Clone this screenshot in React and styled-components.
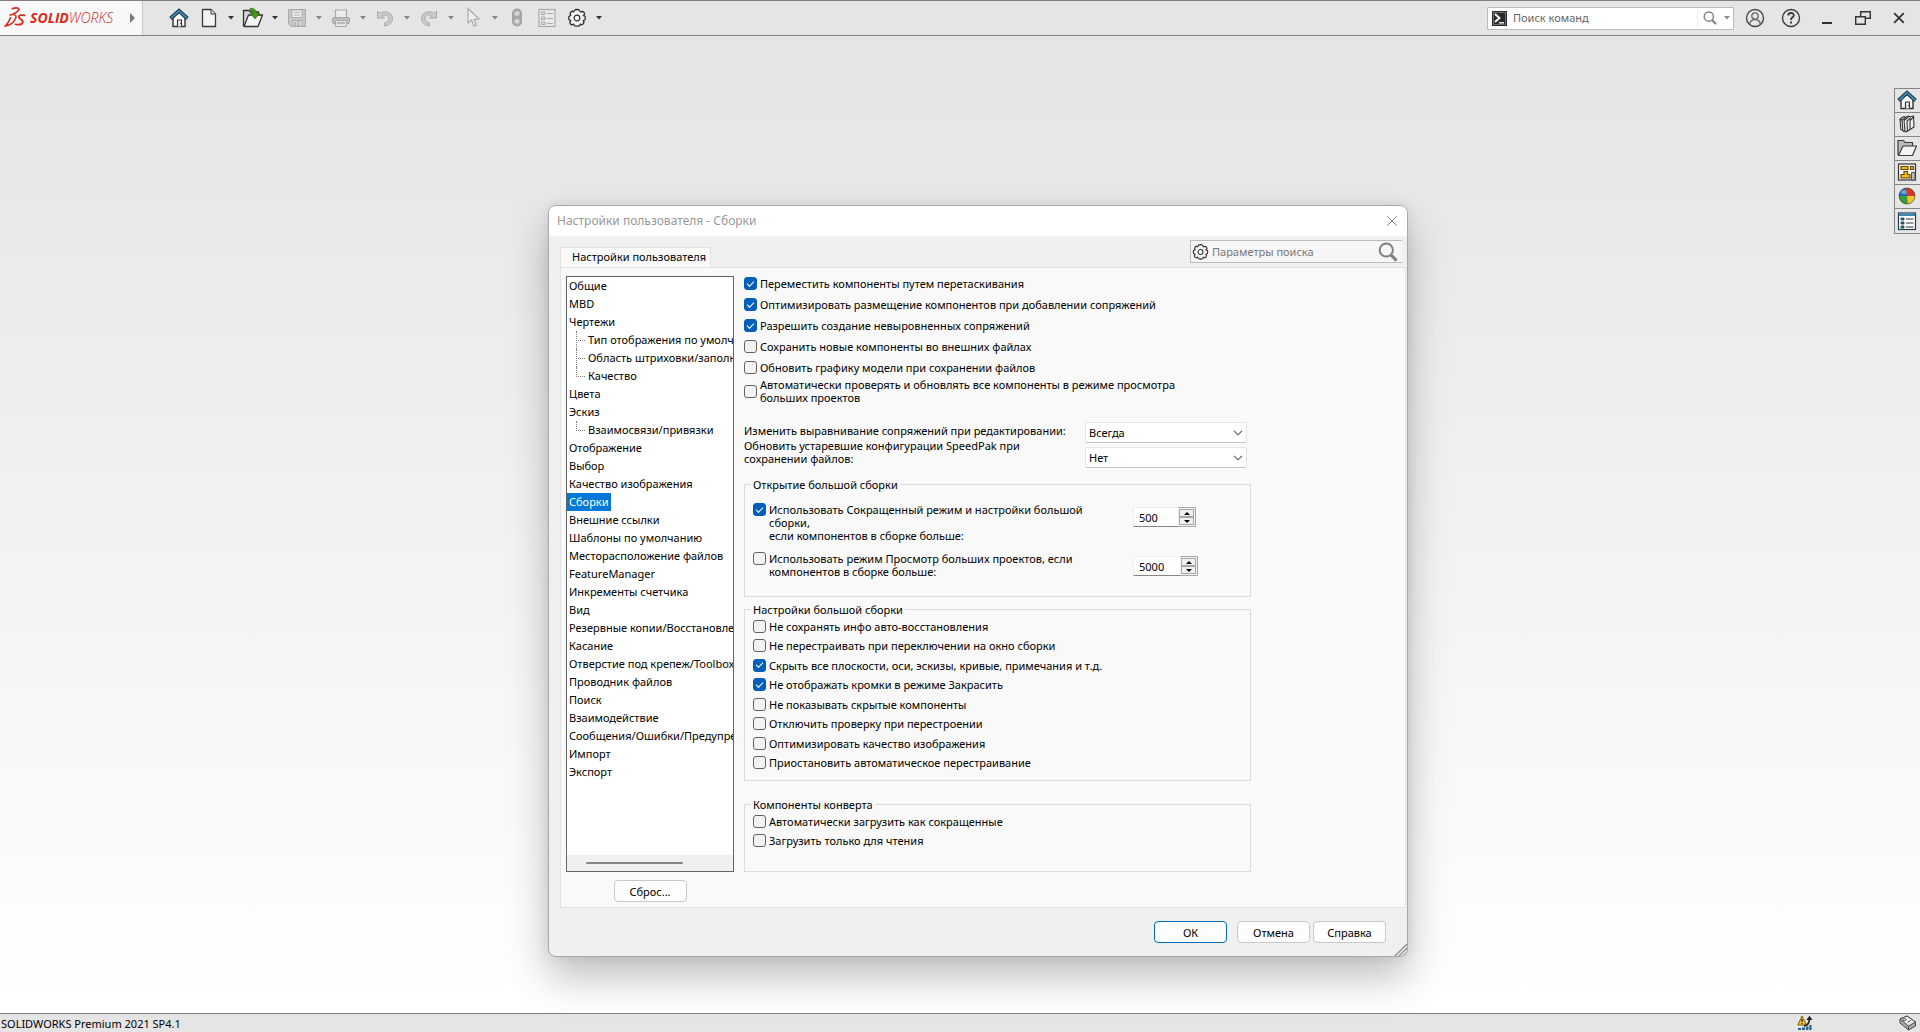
import React, { useState } from 'react'
import styled, { createGlobalStyle } from 'styled-components'

const sections = [
  { name: 'Общие' },
  { name: 'MBD' },
  { name: 'Чертежи' },
  { name: 'Тип отображения по умолчанию', child: true },
  { name: 'Область штриховки/заполнить', child: true },
  { name: 'Качество', child: true, last: true },
  { name: 'Цвета' },
  { name: 'Эскиз' },
  { name: 'Взаимосвязи/привязки', child: true, last: true },
  { name: 'Отображение' },
  { name: 'Выбор' },
  { name: 'Качество изображения' },
  { name: 'Сборки' },
  { name: 'Внешние ссылки' },
  { name: 'Шаблоны по умолчанию' },
  { name: 'Месторасположение файлов' },
  { name: 'FeatureManager' },
  { name: 'Инкременты счетчика' },
  { name: 'Вид' },
  { name: 'Резервные копии/Восстановление' },
  { name: 'Касание' },
  { name: 'Отверстие под крепеж/Toolbox' },
  { name: 'Проводник файлов' },
  { name: 'Поиск' },
  { name: 'Взаимодействие' },
  { name: 'Сообщения/Ошибки/Предупреждения' },
  { name: 'Импорт' },
  { name: 'Экспорт' },
]

const generalOptions = [
  { text: 'Переместить компоненты путем перетаскивания', on: true },
  { text: 'Оптимизировать размещение компонентов при добавлении сопряжений', on: true },
  { text: 'Разрешить создание невыровненных сопряжений', on: true },
  { text: 'Сохранить новые компоненты во внешних файлах' },
  { text: 'Обновить графику модели при сохранении файлов' },
  { text: 'Автоматически проверять и обновлять все компоненты в режиме просмотра\nбольших проектов' },
]

const largeOptions = [
  { text: 'Не сохранять инфо авто-восстановления' },
  { text: 'Не перестраивать при переключении на окно сборки' },
  { text: 'Скрыть все плоскости, оси, эскизы, кривые, примечания и т.д.', on: true },
  { text: 'Не отображать кромки в режиме Закрасить', on: true },
  { text: 'Не показывать скрытые компоненты' },
  { text: 'Отключить проверку при перестроении' },
  { text: 'Оптимизировать качество изображения' },
  { text: 'Приостановить автоматическое перестраивание' },
]

const envelopeOptions = [
  { text: 'Автоматически загрузить как сокращенные' },
  { text: 'Загрузить только для чтения' },
]

/* ---------- icons ---------- */

const HomeIcon = () => (
  <svg width="22" height="22" viewBox="0 0 22 22">
    <path d="M5 10.5V19.5H17V10.5L11 5Z" fill="#fff" stroke="#333" strokeWidth="1.4" />
    <path d="M9.5 19.5V13H13.5V19.5" fill="#eee" stroke="#333" strokeWidth="1.2" />
    <path d="M2.5 11.5L11 3.8L19.5 11.5" fill="none" stroke="#173647" strokeWidth="3.8" />
    <path d="M2.8 11.2L11 3.8L19.2 11.2" fill="none" stroke="#3d86ad" strokeWidth="1.9" />
    <path d="M12 16.5h.8" stroke="#333" />
  </svg>
)

const NewIcon = () => (
  <svg width="22" height="22" viewBox="0 0 22 22">
    <path d="M4.5 2.5H13L17.5 7V19.5H4.5Z" fill="#f4f4f4" stroke="#3c3c3c" strokeWidth="1.3" strokeLinejoin="round" />
    <path d="M13 2.5V7H17.5" fill="#ddd" stroke="#3c3c3c" />
  </svg>
)

const OpenIcon = () => (
  <svg width="22" height="22" viewBox="0 0 22 22">
    <path d="M1.5 19V3.5H7L8.5 5H16.5V10" fill="#d5d5d5" stroke="#333" strokeWidth="1.3" />
    <path d="M2 19.5L6.5 8H20.5L16 19.5Z" fill="#f5f5f5" stroke="#333" strokeWidth="1.3" strokeLinejoin="round" />
    <path d="M8 1.5C12 .8 14.5 3 14.5 6.5H17.5L13 12L8.5 6.5H11.5C11.5 4 10 3.5 8 3.5Z" fill="#3c9a0e" stroke="#24700a" strokeWidth=".6" />
  </svg>
)

const SaveIcon = () => (
  <svg width="22" height="22" viewBox="0 0 22 22">
    <path d="M2.5 2.5H19.5V19.5H5L2.5 17Z" fill="#c6c6c6" stroke="#aaa" />
    <path d="M6 3H16V10.5H6Z" fill="#eee" stroke="#aeaeae" />
    <path d="M8 5.5H14M8 8H14" stroke="#b5b5b5" />
    <path d="M7 13.5H16V19H7Z" fill="#ddd" stroke="#aeaeae" />
    <path d="M9.5 15V19M12.5 14V19" stroke="#aaa" strokeWidth="1.4" />
  </svg>
)

const PrintIcon = () => (
  <svg width="22" height="22" viewBox="0 0 22 22">
    <path d="M5.5 11V3H16.5V11" fill="#ececec" stroke="#aaa" strokeWidth="1.2" />
    <rect x="2.5" y="10.5" width="17" height="6" rx="1.5" fill="#bdbdbd" stroke="#a5a5a5" />
    <path d="M5.5 13.5H16.5V19.5H5.5Z" fill="#e3e3e3" stroke="#a9a9a9" />
    <path d="M7 16H15" stroke="#aaa" strokeWidth="1.5" />
  </svg>
)

const UndoIcon = ({ flip }) => (
  <svg width="22" height="22" viewBox="0 0 22 22">
    <g transform={flip ? 'matrix(-1 0 0 1 22 0)' : undefined}>
      <path
        d="M3.5 4V11H10.5L8.3 8.8C12 6.5 15.5 9 15 12C14.7 14.2 12.7 15.7 10.5 16V18.8C14.5 18.8 18.3 15.8 18.5 12C18.7 6 11.5 2.5 6 6.5Z"
        fill="#cbcbcb"
        stroke="#aaa"
      />
    </g>
  </svg>
)

const CursorIcon = () => (
  <svg width="22" height="22" viewBox="0 0 22 22">
    <path d="M6 1.5V16L9.5 13L12 19L14.5 18L12 12.3L17 12Z" fill="#efefef" stroke="#aaa" strokeWidth="1.2" />
  </svg>
)

const RebuildIcon = () => (
  <svg width="22" height="22" viewBox="0 0 22 22">
    <rect x="6" y="1.5" width="10" height="18" rx="5" fill="#a4a4a4" />
    <circle cx="11" cy="6.5" r="3" fill="#c4c4c4" />
    <circle cx="11" cy="14.5" r="3" fill="#c4c4c4" />
    <path d="M11 5.2V7.8M9.7 6.5H12.3M11 13.2V15.8M9.7 14.5H12.3" stroke="#eee" />
  </svg>
)

const PropsIcon = () => (
  <svg width="22" height="22" viewBox="0 0 22 22">
    <rect x="3" y="2.5" width="16" height="17" fill="#e9e9e9" stroke="#aaa" strokeWidth="1.2" />
    <path d="M5.5 5H9V7.5H5.5ZM5.5 10H9V12.5H5.5ZM5.5 15H9V17.5H5.5Z" fill="#ddd" stroke="#aaa" />
    <path d="M11 6.5H17M11 11.5H17M11 16.5H17" stroke="#aaa" />
  </svg>
)

const GearIcon = () => (
  <svg width="22" height="22" viewBox="0 0 22 22">
    <path
      d="M8.5 3.5Q9 2.5 11 2.5T13.5 3.5L14.5 5Q16.5 3.8 18 5.5T17.2 8.5L19 9.3Q19.6 11 19 12.7L17.2 13.5Q18.8 15.3 17 17T14.5 17L13.5 18.6Q11 19.8 8.5 18.6L7.5 17Q5.6 18.4 4.4 17T4.8 13.5L3 12.7Q2.4 11 3 9.3L4.8 8.5Q3.5 6.5 5 5T7.5 5Z"
      fill="#f1f1f1"
      stroke="#333"
      strokeWidth="1.3"
      strokeLinejoin="round"
    />
    <circle cx="11" cy="11" r="2.8" fill="#f8f8f8" stroke="#333" strokeWidth="1.2" />
  </svg>
)

const Caret = ({ color = '#8b8b8b' }) => (
  <svg width="6" height="4" viewBox="0 0 6 4">
    <path d="M0 0H6L3 3.5Z" fill={color} />
  </svg>
)

const Magnifier = ({ size = 14 }) => (
  <svg width={size} height={size} viewBox="0 0 14 14">
    <circle cx="5.8" cy="5.6" r="4.6" fill="none" stroke="#808080" strokeWidth="1.4" />
    <path d="M9.2 9.2L13 13" stroke="#808080" strokeWidth="2.1" />
  </svg>
)

const PromptIcon = () => (
  <svg width="15" height="15" viewBox="0 0 15 15">
    <rect width="15" height="15" fill="#2b2b2b" />
    <rect x="1.5" y="1.5" width="12" height="12" fill="none" stroke="#999" strokeWidth=".6" />
    <path d="M3 3L7.5 7L3 11" fill="none" stroke="#fff" strokeWidth="1.8" />
    <path d="M7 11.8H12" stroke="#fff" strokeWidth="1.4" />
  </svg>
)

const UserIcon = () => (
  <svg width="20" height="20" viewBox="0 0 20 20" fill="none" stroke="#484848">
    <circle cx="10" cy="10" r="8.5" strokeWidth="1.4" />
    <circle cx="10" cy="8" r="3.2" stroke="#666" strokeWidth="1.3" />
    <path d="M4.8 16C5 13 7 11.6 10 11.6S15 13 15.2 16" stroke="#666" strokeWidth="1.3" />
  </svg>
)

const HelpIcon = () => (
  <svg width="20" height="20" viewBox="0 0 20 20" fill="none" stroke="#3d3d3d">
    <circle cx="10" cy="10" r="8.5" strokeWidth="1.4" />
    <path d="M7.2 7.5C7.4 4 13 4.2 12.8 7.5C12.7 9.5 10 9.3 10 12" strokeWidth="1.9" />
    <path d="M10 13.5V15.5" strokeWidth="2" />
  </svg>
)

const MinimizeIcon = () => (
  <svg width="18" height="18" viewBox="0 0 18 18">
    <path d="M4 14H14" stroke="#333" strokeWidth="2" />
  </svg>
)

const RestoreIcon = () => (
  <svg width="18" height="18" viewBox="0 0 18 18" fill="none" stroke="#333" strokeWidth="1.4">
    <path d="M6.7 7V2.7H16.3V9.3H11.5" />
    <path d="M1.7 7.7H11.3V15.3H1.7Z" />
  </svg>
)

const CrossIcon = ({ color = '#333', weight = 1.8 }) => (
  <svg width="12" height="12" viewBox="0 0 12 12">
    <path d="M1.2 1.2L10.8 10.8M10.8 1.2L1.2 10.8" stroke={color} strokeWidth={weight} />
  </svg>
)

const LibraryIcon = () => (
  <svg width="20" height="20" viewBox="0 0 20 20" stroke="#333" strokeWidth="1.1" strokeLinejoin="round">
    <path d="M3 5L7 2.5L8.5 3.5L11.5 2L13 3L16.5 2L17 13L9 18L7.5 17L6.5 17.5L5.5 16L3.8 15.5Z" fill="#f2f2f2" />
    <path d="M3 5L5 6.3L5.8 16.2M5 6.3L8.5 3.5M7 6.5L8 17M7 6.5L11.5 3M10 7L10.5 17M10 7L13.5 4.2M13 6.5V15.5M13 6.5L16.5 3" fill="none" />
  </svg>
)

const FolderIcon = () => (
  <svg width="20" height="20" viewBox="0 0 20 20" stroke="#3b3b3b" strokeWidth="1.2" strokeLinejoin="round">
    <path d="M1 17V2.5H6.5L8 4.5H15.5V8" fill="#bcbcbc" />
    <path d="M1.5 17.5L6 8H19.5L15.5 17.5Z" fill="#f3f3f3" />
  </svg>
)

const PaletteIcon = () => (
  <svg width="20" height="20" viewBox="0 0 20 20">
    <rect x="1.5" y="2" width="17" height="16" fill="#f6f6f6" stroke="#333" strokeWidth="1.2" />
    <path d="M4 4.5H11V7.5H4ZM13.5 4.5H16.5V7.5H13.5ZM7 9.5H10.5V12.5H13V16H4V12.5H7Z" fill="#f5b914" stroke="#5f4605" strokeWidth="1.1" />
    <path d="M14.5 10.5H18V18H14.5Z" fill="#bbb" stroke="#555" />
  </svg>
)

const SphereIcon = () => (
  <svg width="20" height="20" viewBox="0 0 20 20">
    <circle cx="10" cy="10" r="8" fill="#287e36" />
    <path d="M10 10L9 2A8 8 0 0 0 2 10Z" fill="#256bb8" />
    <path d="M10 10L9 2A8 8 0 0 1 18 10Z" fill="#dc3426" />
    <path d="M10 10H18A8 8 0 0 1 10.5 18Z" fill="#f0c330" />
    <path d="M10 10H2A8 8 0 0 0 10.5 18Z" fill="#3b9b3c" />
    <ellipse cx="7" cy="6" rx="3" ry="2" fill="#fff" opacity=".35" />
    <circle cx="10" cy="10" r="8" fill="none" stroke="#333" strokeOpacity=".5" />
  </svg>
)

const TaskListIcon = () => (
  <svg width="20" height="20" viewBox="0 0 20 20">
    <rect x="1.5" y="2" width="17" height="16.5" fill="#fff" stroke="#1d3d50" strokeWidth="1.2" />
    <path d="M2 2.5H18V5H2Z" fill="#3d86ad" />
    <path d="M4 7H7V9H4ZM4 11H7V13H4ZM4 15H7V17H4Z" fill="#2f7299" stroke="#17394c" strokeWidth=".8" />
    <path d="M9 8H16.5M9 12H16.5M9 16H16.5" stroke="#333" strokeWidth="1.1" />
  </svg>
)

const AlertIcon = () => (
  <svg width="16" height="16" viewBox="0 0 16 16">
    <path d="M1 15V13H4V15ZM5 15V12.5H8V15ZM9 15V11.5H11.5V15ZM12.3 15V10H14.5V15Z" fill="#286383" />
    <path d="M5 1L9.5 10H.8Z" fill="#f6c21c" stroke="#6b5000" strokeWidth=".9" />
    <path d="M5 4V7M5 8V9" stroke="#222" strokeWidth="1.2" />
    <path d="M7 11C10.5 10.5 12 8.5 12.3 5" fill="none" stroke="#222" strokeWidth="1.8" />
    <path d="M9.3 5H15.5L12.6 .8Z" fill="#222" />
  </svg>
)

const TagIcon = () => (
  <svg width="18" height="16" viewBox="0 0 18 16" stroke="#484848" strokeLinejoin="round">
    <path d="M1 4L8 1L16.5 7V11L9.5 15L1 8Z" fill="#aaa" />
    <path d="M1 4L8 1L16.5 7L9.5 11Z" fill="#eee" />
    <path d="M9.5 11V15" />
    <ellipse cx="5.5" cy="4.7" rx="1.7" ry="1" fill="#fff" />
    <path d="M8.5 7.5L11.5 5.5" />
  </svg>
)

/* loop with a tail on the left, tall curl above it, open bend on the right */
const DsMark = () => (
  <svg width="22" height="22" viewBox="0 0 22 22" fill="none" stroke="#d52b1e" strokeLinecap="round">
    <path d="M8.5 1.6C12 .4 15.4 .8 14.8 2.8C14.2 4.4 11.4 6 9.4 7" strokeWidth="1.7" />
    <path d="M6 8C10 6.8 13 8 11.6 11.2C10.2 14.8 6.4 18 1.4 19C3.6 16.6 5.2 14 6.6 10.6" strokeWidth="1.5" />
    <path d="M20.6 8.4C17.6 7.6 14.8 8.2 14.8 10C14.8 12 19.6 13 18.8 15.4C18 17.4 15 18 11.6 17.4" strokeWidth="1.8" />
  </svg>
)

const toolbar = [
  { label: 'Создать', Icon: NewIcon, caret: '#333' },
  { label: 'Открыть', Icon: OpenIcon, caret: '#333' },
  { label: 'Сохранить', Icon: SaveIcon, caret: '#858585' },
  { label: 'Печать', Icon: PrintIcon, caret: '#858585' },
  { label: 'Отменить', Icon: UndoIcon, caret: '#858585' },
  { label: 'Повторить', Icon: () => <UndoIcon flip />, caret: '#858585' },
  { label: 'Выбрать', Icon: CursorIcon, caret: '#858585' },
]

const sideTabs = [
  { label: 'Ресурсы', Icon: HomeIcon },
  { label: 'Библиотека', Icon: LibraryIcon },
  { label: 'Проводник', Icon: FolderIcon },
  { label: 'Палитра видов', Icon: PaletteIcon },
  { label: 'Внешний вид', Icon: SphereIcon },
  { label: 'Пользовательские свойства', Icon: TaskListIcon },
]

function Check({ id, option }) {
  const [checked, setChecked] = useState(!!option.on)
  return (
    <CheckRow $top={option.top}>
      <CheckBox id={id} type="checkbox" checked={checked} onChange={() => setChecked(!checked)} />
      <label htmlFor={id}>{option.text}</label>
    </CheckRow>
  )
}

function Spinner({ label, initial }) {
  const [value, setValue] = useState(initial)
  return (
    <SpinnerBox>
      <SpinnerInput
        type="number"
        aria-label={label}
        value={value}
        $digits={String(initial).length}
        onChange={(e) => setValue(Number(e.target.value))}
      />
      <SpinnerButtons>
        <SpinnerButton type="button" aria-label="Больше" onClick={() => setValue(value + 1)}>
          <svg width="6" height="3" viewBox="0 0 6 3"><path d="M0 3L3 0L6 3Z" /></svg>
        </SpinnerButton>
        <SpinnerButton type="button" aria-label="Меньше" onClick={() => setValue(value - 1)}>
          <svg width="6" height="3" viewBox="0 0 6 3"><path d="M0 0L3 3L6 0Z" /></svg>
        </SpinnerButton>
      </SpinnerButtons>
    </SpinnerBox>
  )
}

function Dropdown({ id, options }) {
  return (
    <SelectWrap>
      <Select id={id}>
        {options.map((o) => (
          <option key={o}>{o}</option>
        ))}
      </Select>
      <svg width="10" height="6" viewBox="0 0 10 6">
        <path d="M1 .8L5 4.8L9 .8" fill="none" stroke="#555" strokeWidth="1.1" />
      </svg>
    </SelectWrap>
  )
}

export default function App() {
  const [selected, setSelected] = useState('Сборки')

  return (
    <Page>
      <GlobalStyle />
      <TopBar>
        <Brand>
          <DsMark />
          <BrandName><b>SOLID</b>WORKS</BrandName>
          <BrandArrow type="button" aria-label="Меню">
            <svg width="5" height="10" viewBox="0 0 5 10"><path d="M0 0L5 5L0 10Z" fill="#777" /></svg>
          </BrandArrow>
        </Brand>
        <Tools>
          <ToolButton type="button" aria-label="Домой" $spaced><HomeIcon /></ToolButton>
          {toolbar.map(({ label, Icon, caret }) => (
            <ToolPair key={label}>
              <ToolButton type="button" aria-label={label}><Icon /></ToolButton>
              <ToolButton type="button" aria-label={label + ': меню'}><Caret color={caret} /></ToolButton>
            </ToolPair>
          ))}
          <ToolButton type="button" aria-label="Перестроить" $spaced><RebuildIcon /></ToolButton>
          <ToolButton type="button" aria-label="Свойства файла" $spaced><PropsIcon /></ToolButton>
          <ToolButton type="button" aria-label="Параметры"><GearIcon /></ToolButton>
          <ToolButton type="button" aria-label="Параметры: меню"><Caret color="#333" /></ToolButton>
        </Tools>
        <CommandSearch>
          <PromptIcon />
          <CommandInput type="text" aria-label="Поиск команд" placeholder="Поиск команд" />
          <SearchEnd type="button" aria-label="Найти">
            <Magnifier />
            <Caret />
          </SearchEnd>
        </CommandSearch>
        <WindowButtons>
          <WindowButton type="button" aria-label="Вход"><UserIcon /></WindowButton>
          <WindowButton type="button" aria-label="Справка"><HelpIcon /></WindowButton>
          <WindowButton type="button" aria-label="Свернуть"><MinimizeIcon /></WindowButton>
          <WindowButton type="button" aria-label="Восстановить"><RestoreIcon /></WindowButton>
          <WindowButton type="button" aria-label="Закрыть"><CrossIcon /></WindowButton>
        </WindowButtons>
      </TopBar>

      <Desktop>
        <TaskPane>
          {sideTabs.map(({ label, Icon }) => (
            <TaskTab key={label} type="button" aria-label={label}><Icon /></TaskTab>
          ))}
        </TaskPane>

        <Dialog role="dialog" aria-labelledby="dialog-title">
          <TitleBar>
            <DialogTitle id="dialog-title">Настройки пользователя - Сборки</DialogTitle>
            <CloseButton type="button" aria-label="Закрыть окно"><CrossIcon color="#888" weight={1} /></CloseButton>
          </TitleBar>

          <TabStrip>
            <Tab type="button">Настройки пользователя</Tab>
            <OptionSearch>
              <GearIcon />
              <OptionInput type="text" aria-label="Параметры поиска" placeholder="Параметры поиска" />
              <Magnifier size={20} />
            </OptionSearch>
          </TabStrip>

          <Panel>
            <LeftColumn>
              <ListBox>
                <SectionList>
                  {sections.map((s) => (
                    <SectionRow key={s.name} $child={s.child}>
                      {s.child && <Branch $last={s.last} />}
                      <SectionButton
                        type="button"
                        $selected={s.name === selected}
                        onClick={() => setSelected(s.name)}
                      >
                        {s.name}
                      </SectionButton>
                    </SectionRow>
                  ))}
                </SectionList>
                <ScrollTrack><ScrollThumb /></ScrollTrack>
              </ListBox>
              <PushButton type="button">Сброс...</PushButton>
            </LeftColumn>

            <Options>
              <GeneralChecks>
                {generalOptions.map((o, i) => (
                  <Check key={o.text} id={'general-' + i} option={o} />
                ))}
              </GeneralChecks>

              <SelectGrid>
                <SelectLabels>
                  <label htmlFor="mate-align">Изменить выравнивание сопряжений при редактировании:</label>
                  <label htmlFor="speedpak">{'Обновить устаревшие конфигурации SpeedPak при\nсохранении файлов:'}</label>
                </SelectLabels>
                <SelectColumn>
                  <Dropdown id="mate-align" options={['Всегда', 'Никогда', 'Запрос']} />
                  <Dropdown id="speedpak" options={['Нет', 'Все']} />
                </SelectColumn>
              </SelectGrid>

              <OpenGroup>
                <legend>Открытие большой сборки</legend>
                <OpenRows>
                  <Check
                    id="lightweight"
                    option={{
                      text: 'Использовать Сокращенный режим и настройки большой\nсборки,\nесли компонентов в сборке больше:',
                      on: true,
                      top: true,
                    }}
                  />
                  <Spinner label="Порог сокращенного режима" initial={500} />
                  <Check
                    id="review"
                    option={{
                      text: 'Использовать режим Просмотр больших проектов, если\nкомпонентов в сборке больше:',
                      top: true,
                    }}
                  />
                  <Spinner label="Порог просмотра проектов" initial={5000} />
                </OpenRows>
              </OpenGroup>

              <LargeGroup>
                <legend>Настройки большой сборки</legend>
                <GroupChecks>
                  {largeOptions.map((o, i) => (
                    <Check key={o.text} id={'large-' + i} option={o} />
                  ))}
                </GroupChecks>
              </LargeGroup>

              <EnvelopeGroup>
                <legend>Компоненты конверта</legend>
                <GroupChecks>
                  {envelopeOptions.map((o, i) => (
                    <Check key={o.text} id={'envelope-' + i} option={o} />
                  ))}
                </GroupChecks>
              </EnvelopeGroup>
            </Options>
          </Panel>

          <Footer>
            <PushButton type="button" $primary>ОК</PushButton>
            <FooterPair>
              <PushButton type="button">Отмена</PushButton>
              <PushButton type="button">Справка</PushButton>
            </FooterPair>
          </Footer>
          <Grip width="13" height="13" viewBox="0 0 13 13">
            <path d="M1 13L13 1M5 13L13 5M9 13L13 9" stroke="#8d8d8d" strokeWidth="1.4" />
          </Grip>
        </Dialog>
      </Desktop>

      <StatusBar>
        <span>SOLIDWORKS Premium 2021 SP4.1</span>
        <StatusIcons>
          <AlertIcon />
          <TagIcon />
        </StatusIcons>
      </StatusBar>
    </Page>
  )
}

const GlobalStyle = createGlobalStyle`
  * { box-sizing: border-box; }
  body {
    margin: 0;
    font-family: "Noto Sans", "Open Sans", sans-serif;
    font-size: 11px;
    line-height: 13px;
    color: #000;
  }
  button, input, select {
    font: inherit;
    color: inherit;
  }
  button {
    border: 0;
    padding: 0;
    background: none;
  }
  svg {
    display: block;
    flex: none;
  }
`

const Page = styled.div`
  display: flex;
  flex-direction: column;
  min-height: 100vh;
`

const TopBar = styled.header`
  display: flex;
  align-items: center;
  height: 36px;
  background: #e5e5e5;
  border-top: 1px solid #808080;
  border-bottom: 1px solid #808080;
`

const Brand = styled.div`
  display: flex;
  align-items: center;
  align-self: stretch;
  width: 143px;
  padding: 0 7px 0 4px;
  background: #f8f8f8;
  border-right: 1px solid #c8c8c8;
`

const BrandName = styled.span`
  flex: 1;
  padding-left: 4px;
  color: #d52b1e;
  font-family: "Open Sans", "Noto Sans", sans-serif;
  font-size: 14px;
  font-weight: 300;
  line-height: 16px;
  font-style: italic;
  white-space: nowrap;
  b {
    font-weight: 700;
  }
`

const BrandArrow = styled.button`
  flex: none;
`

const Tools = styled.div`
  display: flex;
  flex: 1;
  padding-left: 25px;
`

const ToolPair = styled.div`
  display: flex;
`

const ToolButton = styled.button`
  display: flex;
  align-items: center;
  justify-content: center;
  width: 22px;
  height: 22px;
  margin-right: ${(p) => (p.$spaced ? '8px' : '0')};
`

const CommandSearch = styled.div`
  display: flex;
  align-items: center;
  width: 247px;
  height: 23px;
  padding-left: 4px;
  background: #fff;
  border: 1px solid #bbb;
  border-radius: 1px;
`

const CommandInput = styled.input`
  flex: 1;
  min-width: 0;
  padding: 0 6px 1px;
  border: 0;
  outline: 0;
  background: none;
  &::placeholder {
    color: #666;
    opacity: 1;
  }
`

const SearchEnd = styled.button`
  display: flex;
  align-items: center;
  gap: 7px;
  height: 21px;
  padding: 0 3px 0 5px;
  border-left: 1px solid #eee;
`

const WindowButtons = styled.div`
  display: flex;
  padding: 0 3px;
`

const WindowButton = styled.button`
  display: flex;
  align-items: center;
  justify-content: center;
  width: 36px;
  height: 24px;
`

const Desktop = styled.main`
  position: relative;
  flex: 1;
  display: flex;
  justify-content: flex-end;
  align-items: flex-start;
  padding-top: 52px;
  background: linear-gradient(#e4e4e4, #fff);
`

const TaskPane = styled.nav`
  display: flex;
  flex-direction: column;
  width: 26px;
  border: 1px solid #858585;
  border-right: 0;
  background: #e6e6e6;
`

const TaskTab = styled.button`
  display: flex;
  align-items: center;
  justify-content: center;
  height: 24px;
  padding: 0 1px 1px 0;
  &:not(:last-child) {
    border-bottom: 1px solid #858585;
  }
`

const Dialog = styled.section`
  position: absolute;
  top: 169px;
  left: 548px;
  z-index: 1;
  width: 860px;
  background: #f0f0f0;
  border: 1px solid #a8a8a8;
  border-radius: 8px;
  box-shadow: 0 20px 40px rgba(0, 0, 0, 0.25), 0 0 12px rgba(0, 0, 0, 0.08);
  overflow: hidden;
`

const TitleBar = styled.div`
  display: flex;
  align-items: center;
  justify-content: space-between;
  height: 30px;
  padding: 0 9px 0 8px;
  background: #fff;
`

const DialogTitle = styled.h1`
  margin: 0;
  font-size: 12px;
  font-weight: 400;
  line-height: 16px;
  color: #999;
`

const CloseButton = styled.button`
  padding: 0;
`

const TabStrip = styled.div`
  display: flex;
  align-items: flex-end;
  justify-content: space-between;
  height: 31px;
  padding: 0 5px 0 11px;
`

const Tab = styled.button`
  height: 20px;
  padding: 0 4px 2px 11px;
  background: #f9f9f9;
  border: 1px solid #e2e2e2;
  border-bottom: 0;
`

const OptionSearch = styled.div`
  display: flex;
  align-items: center;
  align-self: flex-start;
  width: 212px;
  height: 23px;
  margin-top: 4px;
  padding-right: 4px;
  background: #f6f6f6;
  border: 1px solid #bcbcbc;
  border-right: 0;
  svg:first-child {
    width: 19px;
  }
`

const OptionInput = styled.input`
  flex: 1;
  min-width: 0;
  padding: 0 2px;
  border: 0;
  outline: 0;
  background: none;
  &::placeholder {
    color: #777;
    opacity: 1;
  }
`

const Panel = styled.div`
  display: flex;
  gap: 10px;
  margin: 0 1px 0 11px;
  padding: 5px 4px 5px 5px;
  background: #f9f9f9;
  border: 1px solid #e2e2e2;
`

const LeftColumn = styled.div`
  display: flex;
  flex-direction: column;
  align-items: center;
  gap: 8px;
  width: 168px;
  padding-top: 3px;
`

const ListBox = styled.div`
  display: flex;
  flex: 1;
  flex-direction: column;
  justify-content: space-between;
  width: 100%;
  background: #fff;
  border: 1px solid #646464;
  overflow: hidden;
`

const SectionList = styled.ul`
  margin: 0;
  padding: 0;
  list-style: none;
`

const SectionRow = styled.li`
  display: flex;
  height: 18px;
  padding-left: ${(p) => (p.$child ? '9px' : '0')};
`

const Branch = styled.span`
  position: relative;
  flex: none;
  width: 10px;
  &::before {
    content: '';
    position: absolute;
    top: 0;
    left: 0;
    width: 9px;
    height: ${(p) => (p.$last ? '10px' : '18px')};
    border-left: 1px dotted #808080;
  }
  &::after {
    content: '';
    position: absolute;
    top: 9px;
    left: 0;
    width: 9px;
    border-top: 1px dotted #808080;
  }
`

const SectionButton = styled.button`
  padding: 0 2px;
  line-height: 18px;
  white-space: nowrap;
  color: ${(p) => (p.$selected ? '#fff' : '#000')};
  background: ${(p) => (p.$selected ? '#0078d7' : 'none')};
`

const ScrollTrack = styled.div`
  display: flex;
  align-items: center;
  height: 16px;
  padding-left: 19px;
  background: #f0f0f0;
`

const ScrollThumb = styled.div`
  width: 97px;
  height: 2px;
  background: #868686;
  border-radius: 1px;
`

const Options = styled.div`
  width: 507px;
  padding-bottom: 30px;
`

const CheckRow = styled.div`
  display: flex;
  align-items: ${(p) => (p.$top ? 'flex-start' : 'center')};
  gap: 3px;
  label {
    white-space: pre;
  }
`

const CheckBox = styled.input`
  appearance: none;
  display: flex;
  flex: none;
  align-items: center;
  justify-content: center;
  width: 13px;
  height: 13px;
  margin: 0;
  background: #f3f3f3;
  border: 1px solid #626262;
  border-radius: 3px;
  &:checked {
    background: #005fb8;
    border-color: #005fb8;
  }
  &:checked::before {
    content: '';
    width: 6px;
    height: 3px;
    border-left: 1px solid #fff;
    border-bottom: 1px solid #fff;
    transform: translateY(-1px) rotate(-45deg);
  }
`

const GeneralChecks = styled.div`
  ${CheckRow} {
    min-height: 21px;
  }
`

const SelectGrid = styled.div`
  display: flex;
  justify-content: space-between;
  margin-top: 18px;
  padding-right: 4px;
`

const SelectLabels = styled.div`
  display: flex;
  flex-direction: column;
  gap: 2px;
  padding-top: 2px;
  white-space: pre;
`

const SelectColumn = styled.div`
  display: flex;
  flex-direction: column;
  gap: 4px;
  width: 162px;
`

const SelectWrap = styled.div`
  position: relative;
  svg {
    position: absolute;
    top: 8px;
    right: 4px;
    pointer-events: none;
  }
`

const Select = styled.select`
  appearance: none;
  display: block;
  width: 100%;
  height: 21px;
  padding: 0 18px 0 3px;
  background: #fff;
  border: 1px solid #e4e4e4;
  border-bottom-color: #c4c4c4;
  border-radius: 2px;
`

const Group = styled.fieldset`
  min-width: 0;
  margin: 0;
  padding: 0 8px;
  border: 1px solid #dcdcdc;
  legend {
    margin-left: -2px;
    padding: 0 2px;
  }
`

const OpenGroup = styled(Group)`
  margin-top: 10px;
  padding-top: 12px;
  padding-bottom: 18px;
`

const LargeGroup = styled(Group)`
  margin-top: 6px;
  padding-bottom: 8px;
`

const EnvelopeGroup = styled(Group)`
  margin-top: 17px;
  padding-bottom: 21px;
`

const OpenRows = styled.div`
  display: grid;
  grid-template-columns: 380px auto;
  row-gap: 10px;
`

const GroupChecks = styled.div`
  ${CheckRow} {
    height: 19px;
  }
  ${CheckRow}:nth-child(odd) {
    height: 20px;
  }
`

const SpinnerBox = styled.div`
  display: flex;
  height: 20px;
  margin-top: 4px;
`

const SpinnerInput = styled.input`
  appearance: textfield;
  width: ${(p) => (p.$digits > 3 ? '47px' : '45px')};
  padding: 0 0 0 5px;
  font-size: 11px;
  background: #fff;
  border: 1px solid #eee;
  border-right: 0;
  border-bottom-color: #868686;
  &::-webkit-inner-spin-button {
    appearance: none;
    margin: 0;
  }
`

const SpinnerButtons = styled.div`
  display: flex;
  flex-direction: column;
  width: 18px;
  padding: 1px;
  background: #f0f0f0;
  border: 1px solid #a8a8a8;
  border-left: 0;
`

const SpinnerButton = styled.button`
  display: flex;
  flex: 1;
  align-items: center;
  justify-content: center;
  background: #f0f0f0;
  border: 1px solid #a8a8a8;
`

const PushButton = styled.button`
  width: 73px;
  height: 22px;
  background: #fdfdfd;
  border: 1px solid ${(p) => (p.$primary ? '#0067b8' : '#c8c8c8')};
  border-radius: 4px;
`

const Footer = styled.div`
  display: flex;
  justify-content: flex-end;
  gap: 10px;
  padding: 13px 21px 13px 0;
`

const FooterPair = styled.div`
  display: flex;
  gap: 3px;
`

const Grip = styled.svg`
  position: absolute;
  right: 0;
  bottom: 0;
`

const StatusBar = styled.footer`
  display: flex;
  align-items: center;
  justify-content: space-between;
  height: 19px;
  padding: 0 3px 0 1px;
  background: #e5e5e5;
  border-top: 1px solid #808080;
`

const StatusIcons = styled.div`
  display: flex;
  align-items: center;
  gap: 86px;
`
